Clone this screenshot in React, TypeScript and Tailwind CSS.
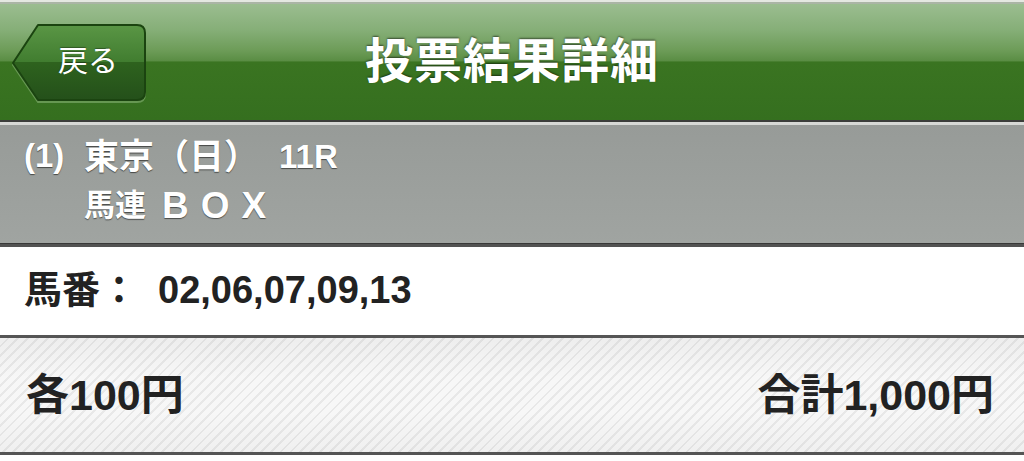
import React from "react";

const FONT = "font-['Liberation_Sans','Noto_Sans_CJK_JP',sans-serif]";

function BackButton() {
  return (
    <button type="button" className="relative flex h-[80px] w-[136px] items-center justify-center pl-[18px] pb-[4px]">
      <svg aria-hidden className="absolute inset-0" width="136" height="80" viewBox="0 0 136 80">
        <defs>
          <linearGradient id="back-fill" x1="0" y1="0" x2="0" y2="1">
            <stop offset="0" stopColor="#5a9645" />
            <stop offset="0.49" stopColor="#417d30" />
            <stop offset="0.5" stopColor="#2e621e" />
            <stop offset="1" stopColor="#24501a" />
          </linearGradient>
        </defs>
        <path d="M27,3 H126 Q134,3 134,11 V70 Q134,78 126,78 H27 L2,41 Z" fill="none" stroke="#7aa868" strokeOpacity="0.7" strokeWidth="2" transform="translate(0,1)" />
        <path d="M27,2 H126 Q134,2 134,10 V69 Q134,77 126,77 H27 L2,40 Z" fill="url(#back-fill)" stroke="#1b4410" strokeWidth="2" strokeLinejoin="round" />
      </svg>
      <span className="relative text-[30px] font-normal leading-none text-white [text-shadow:0_-1px_1px_rgba(0,0,0,0.35)]">戻る</span>
    </button>
  );
}

export default function App() {
  return (
    <div className={`flex h-[461px] w-[1024px] flex-col overflow-hidden bg-white ${FONT}`}>
      {/* top rim */}
      <div className="h-[2px] bg-[#e4e8e1]" />
      <div className="h-[2px] bg-[#aab5a5]" />

      {/* nav bar */}
      <header className="grid h-[116px] grid-cols-[1fr_auto_1fr] items-center bg-[linear-gradient(to_bottom,#9bbd90_0%,#86af78_22%,#6d9c58_40%,#5a8d44_49%,#3a7421_50%,#356f1f_100%)]">
        <div className="pl-[11px] pt-[1px]">
          <BackButton />
        </div>
        <h1 className="pb-[1px] text-[48px] font-bold leading-none tracking-[1px] text-white [text-shadow:0_-1px_2px_rgba(0,0,0,0.55)]">
          投票結果詳細
        </h1>
        <div />
      </header>
      <div className="h-[2px] bg-[#3b3d3a]" />
      <div className="h-[3px] bg-[#d6d8d5]" />

      {/* race info */}
      <section className="flex h-[118px] bg-[linear-gradient(to_bottom,#979b98,#a0a4a1)] pl-[24px] pt-[12px] font-bold text-white [text-shadow:0_1px_1px_rgba(0,0,0,0.55)]">
        <div className="w-[60px] text-[33px] leading-[38px]">(1)</div>
        <div className="flex flex-col">
          <div className="flex h-[38px] items-center text-[35px] leading-none">
            <span>東京（日）</span>
            <span className="ml-[20px] text-[33px]">11R</span>
          </div>
          <div className="mt-[13px] flex h-[34px] items-center text-[31px] leading-none">
            <span>馬連</span>
            <span className="ml-[16px] text-[37px] tracking-[12px]">BOX</span>
          </div>
        </div>
      </section>
      <div className="h-[1px] bg-[#383838]" />
      <div className="h-[3px] bg-[#525252]" />

      {/* numbers */}
      <section className="flex h-[88px] items-center bg-white pl-[24px] pb-[2px] text-[38px] font-bold leading-none text-[#222222]">
        <span>馬番：</span>
        <span className="ml-[20px]">02,06,07,09,13</span>
      </section>
      <div className="h-[3px] bg-[#555555]" />

      {/* amounts */}
      <section className="flex h-[114px] items-center justify-between pl-[26px] pr-[30px] text-[43px] font-bold leading-none text-[#222222] [background-image:linear-gradient(to_bottom,rgba(0,0,0,0.04),rgba(255,255,255,0)_35%,rgba(255,255,255,0)_65%,rgba(0,0,0,0.03)),repeating-linear-gradient(135deg,#f7f7f7_0px,#f7f7f7_5px,#e8e8e8_5px,#e8e8e8_7px)]">
        <span>各100円</span>
        <span>合計1,000円</span>
      </section>
      <div className="h-[3px] bg-[#555555]" />
      <div className="flex-1 bg-white" />
    </div>
  );
}
